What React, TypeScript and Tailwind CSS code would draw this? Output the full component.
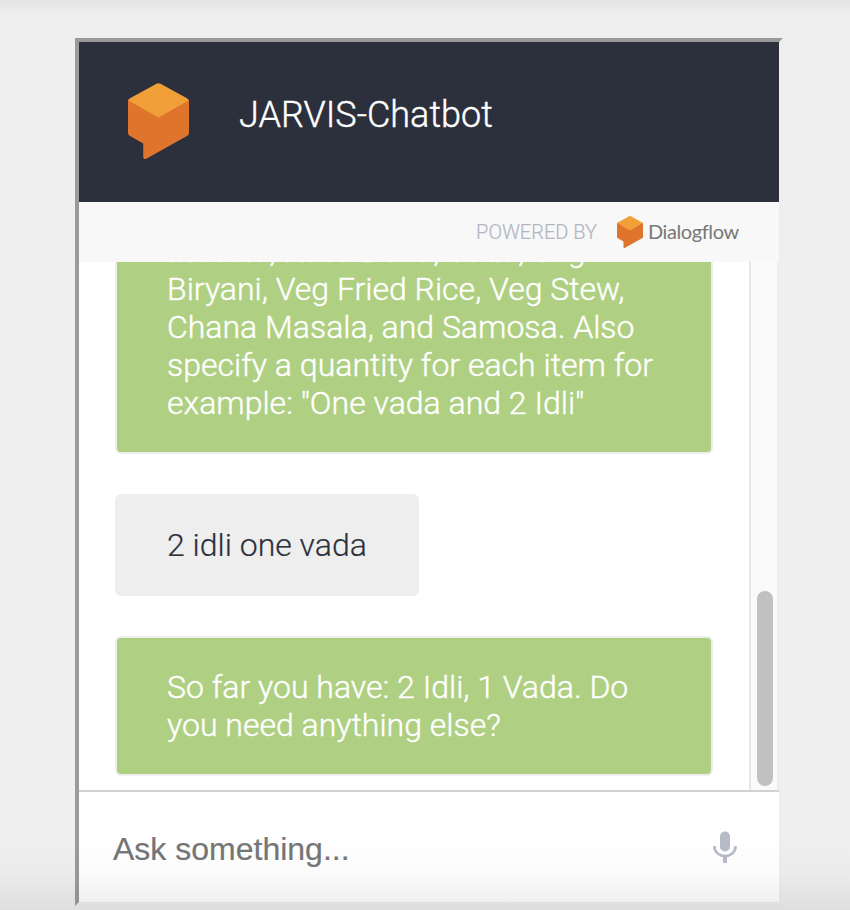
import React from "react";

function Logo({ className }: { className: string }) {
  return (
    <svg viewBox="0 0 60 76" className={className} preserveAspectRatio="none">
      <path d="M1 16 L59 16 Q60 17 60 18 V50 Q60 52 58 53 L17.500 76 Q15 76.500 15 74 V60.500 L2 53 Q0 52 0 50 V18 Q0 17 1 16Z" fill="#df752c" />
      <path d="M0.500 17.500 Q0.500 16 2 15.200 L28 .7 Q30 -.4 32 .7 L58 15.200 Q59.500 16 59.500 17.500 L30 34.500Z" fill="#f19f39" />
    </svg>
  );
}

function Message({ lines, user = false }: { lines: string[]; user?: boolean }) {
  return (
    <div
      className={`shrink-0 rounded-[6px] border-2 border-[#eeeeee] px-[50px] py-[30px] text-[32px] leading-[38px] font-light ${
        user ? "w-[304px] bg-[#eeeeee] text-[#2b303b] [-webkit-text-stroke:0.2px_#2b303b]" : "w-[598px] bg-[#afd082] text-white [-webkit-text-stroke:0.4px_white]"
      }`}
    >
      {lines.map((line) => (
        <p key={line} className="whitespace-nowrap">{line}</p>
      ))}
    </div>
  );
}

export default function App() {
  return (
    <div className="relative h-[910px] w-[850px] overflow-hidden bg-[#efefef] pt-[38px] pl-[75px] font-['Roboto',sans-serif]">
      <main className="flex h-[868px] w-[708px] flex-col border-4 border-t-[#9a9a9a] border-r-[#eeeeee] border-b-[#eeeeee] border-l-[#9a9b9a] bg-white">
        <header className="flex h-[160px] shrink-0 items-start bg-[#2c303c] pl-[49px]">
          <Logo className="mt-[41px] h-[76px] w-[61px]" />
          <h1 className="mt-[52px] ml-[50px] text-[36px] leading-[42px] font-light whitespace-nowrap text-white [-webkit-text-stroke:0.4px_white]">JARVIS-Chatbot</h1>
        </header>
        <div className="flex h-[60px] shrink-0 items-center justify-end bg-[#f8f8f8] pr-[40px]">
          <span className="text-[20px] font-light whitespace-nowrap text-[#b3b6c2] [-webkit-text-stroke:0.2px_#b3b6c2]">POWERED BY</span>
          <Logo className="ml-[20px] h-[32px] w-[26px]" />
          <span className="ml-[5px] w-[91px] pb-[2px] font-['Lato',sans-serif] text-[20px] leading-[24px] tracking-[-0.4px] whitespace-nowrap text-[#777777]">Dialogflow</span>
        </div>
        <section className="flex h-[528px] shrink-0">
          <div className="flex h-full w-[670px] flex-col items-start justify-end gap-[40px] overflow-hidden pb-[14px] pl-[36px]">
            <Message
              lines={[
                "Masala, Rava Dosa, Vada, Veg",
                "Biryani, Veg Fried Rice, Veg Stew,",
                "Chana Masala, and Samosa. Also",
                "specify a quantity for each item for",
                'example: "One vada and 2 Idli"',
              ]}
            />
            <Message user lines={["2 idli one vada"]} />
            <Message lines={["So far you have: 2 Idli, 1 Vada. Do", "you need anything else?"]} />
          </div>
          <div className="flex w-[30px] items-end border-r-2 border-l-2 border-r-[#ededed] border-l-[#e7e7e7] bg-[#fafafa] pb-[4px] pl-[6px]">
            <div className="h-[195px] w-[16px] rounded-full bg-[#c1c1c1]" />
          </div>
        </section>
        <footer className="flex h-[112px] shrink-0 items-center justify-between border-t-2 border-[#d2d2d2] pr-[42px] pl-[34px]">
          <span className="pt-[4px] font-['Liberation_Sans',Arial,sans-serif] text-[32px] leading-[38px] text-[#757575] [-webkit-text-stroke:0.2px_#757575]">Ask something...</span>
          <svg viewBox="0 0 24 32" className="h-[32px] w-[24px]" fill="none">
            <rect x="7" y="0.500" width="10" height="20" rx="5" fill="#b7bbc7" />
            <path d="M1.400 15 C1.400 28.300 22.600 28.300 22.600 15" stroke="#b7bbc7" strokeWidth="2.600" />
            <path d="M12 25 V32" stroke="#b7bbc7" strokeWidth="4" />
          </svg>
        </footer>
      </main>
      <div className="pointer-events-none absolute inset-x-0 top-0 h-[16px] bg-linear-to-b from-black/5 to-transparent" />
      <div className="pointer-events-none absolute inset-x-0 bottom-0 h-[70px] bg-linear-to-b from-transparent via-black/[0.018] to-black/[0.07]" />
    </div>
  );
}
